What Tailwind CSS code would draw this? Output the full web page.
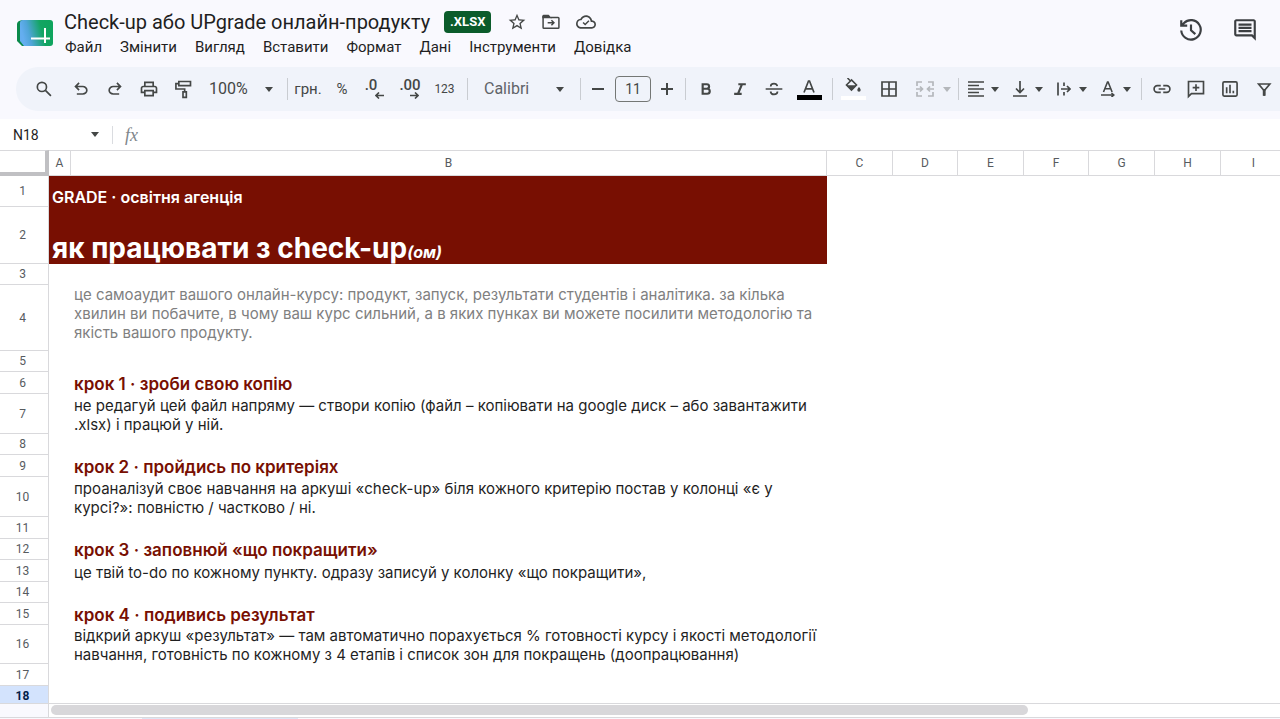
<!DOCTYPE html>
<html lang="uk">
<head>
  <meta charset="UTF-8" />
  <meta name="viewport" content="width=device-width, initial-scale=1.0"/>
  <title>Check-up або UPgrade онлайн-продукту</title>
  <script src="https://cdn.jsdelivr.net/npm/@tailwindcss/browser@4"></script>
</head>
<body class="h-screen flex flex-col overflow-hidden bg-[#f9f9fe] font-[Roboto,sans-serif] text-[#1f1f1f]">

  <!-- Header -->
  <header class="flex shrink-0 items-start h-[67px] pl-4">
    <svg class="w-[38px] h-9 mt-4" viewBox="0 0 38 36" aria-hidden="true">
      <defs>
        <linearGradient id="logo" x1="0" x2="1" y1="0.2" y2="0">
          <stop offset="0" stop-color="#64aef0"/>
          <stop offset="0.2" stop-color="#4fa5d8"/>
          <stop offset="0.6" stop-color="#12a562"/>
          <stop offset="1" stop-color="#0da45c"/>
        </linearGradient>
      </defs>
      <path fill="#0b8a4b" d="M6 4h28v26H6l-5-5V8q0-3 5-4z"/>
      <path fill="url(#logo)" d="M7 4h27q3 0 3 3v20q0 3-3 3H8l-4-5V7q0-3 3-3z"/>
      <path d="M29 12v15M15 22.500h19" stroke="#fff" stroke-width="2" fill="none"/>
    </svg>

    <div class="ml-[10px] mt-2">
      <div class="flex items-center h-7">
        <h1 class="text-xl whitespace-nowrap">Check-up або UPgrade онлайн-продукту</h1>
        <span class="ml-[14px] px-[6px] h-[22px] leading-[22px] rounded bg-[#0b5c2b] text-white text-[13px] font-bold">.XLSX</span>
        <button aria-label="Позначити" class="ml-4 w-5 h-5 text-[#444746]">
          <svg class="w-5 h-5" viewBox="0 0 24 24" fill="currentColor"><path d="M22 9.240l-7.190-.62L12 2 9.190 8.630 2 9.240l5.460 4.730L5.820 21 12 17.270 18.180 21l-1.630-7.030L22 9.240zM12 15.400l-3.760 2.270 1-4.280-3.320-2.880 4.380-.38L12 6.100l1.710 4.040 4.380.38-3.320 2.880 1 4.280L12 15.400z"/></svg>
        </button>
        <button aria-label="Перемістити" class="ml-[14px] w-5 h-5 text-[#444746]">
          <svg class="w-5 h-5" viewBox="0 0 24 24" fill="none" stroke="currentColor" stroke-width="1.800"><path d="M2.500 5v13.500q0 1 1 1h17q1 0 1-1v-11q0-1-1-1h-9M8 13h7M12.500 10l3 3-3 3"/><path fill="currentColor" stroke="none" d="M1.600 7.400V5q0-1.600 1.600-1.600h6L13 7.400z"/></svg>
        </button>
        <button aria-label="Стан документа" class="ml-[15px] w-5 h-5 text-[#444746]">
          <svg class="w-5 h-5" viewBox="0 0 24 24" fill="currentColor"><path d="M19.350 10.040C18.670 6.590 15.640 4 12 4 9.110 4 6.600 5.640 5.350 8.040 2.340 8.360 0 10.910 0 14c0 3.310 2.690 6 6 6h13c2.760 0 5-2.240 5-5 0-2.640-2.050-4.780-4.650-4.960zM19 18H6c-2.210 0-4-1.790-4-4 0-2.050 1.530-3.760 3.560-3.970l1.070-.11.5-.95C8.080 7.140 9.940 6 12 6c2.620 0 4.880 1.860 5.390 4.430l.3 1.500 1.530.11c1.560.1 2.780 1.410 2.780 2.960 0 1.650-1.350 3-3 3z"/><path fill="none" stroke="currentColor" stroke-width="1.800" d="M8.500 12.500l2.500 2.500 4.500-4.500"/></svg>
        </button>
      </div>
      <nav class="flex gap-[18px] ml-px text-[15px] leading-[22px]">
        <button>Файл</button>
        <button>Змінити</button>
        <button>Вигляд</button>
        <button>Вставити</button>
        <button>Формат</button>
        <button>Дані</button>
        <button>Інструменти</button>
        <button>Довідка</button>
      </nav>
    </div>

    <div class="ml-auto mr-[22px] mt-[17px] flex gap-7 text-[#3c3f42]">
      <button aria-label="Історія версій" class="w-[26px] h-[26px]">
        <svg class="w-[26px] h-[26px]" viewBox="0 0 24 24" fill="none" stroke="currentColor" stroke-width="2"><path d="M3 12.500a9 9 0 1 0 2.600-7L3.500 7.600M3 3v5h5.500M12 7v5.200l4 3.600"/></svg>
      </button>
      <button aria-label="Коментарі" class="w-[26px] h-[26px]">
        <svg class="w-[26px] h-[26px]" viewBox="0 0 24 24" fill="currentColor"><path d="M21.990 4c0-1.100-.89-2-1.990-2H4c-1.100 0-2 .9-2 2v12c0 1.100.9 2 2 2h14l4 4-.01-18zM20 4v13.170L18.830 16H4V4h16zM6 12h12v2H6zm0-3h12v2H6zm0-3h12v2H6z"/></svg>
      </button>
    </div>
  </header>

  <!-- Toolbar -->
  <div role="toolbar" class="flex shrink-0 items-center h-[44px] ml-4 pl-2 rounded-l-full bg-[#f0f3fa] overflow-hidden text-[#444746]">
    <button aria-label="Пошук" class="w-10 shrink-0 flex justify-center">
      <svg class="w-5 h-5" viewBox="0 0 24 24" fill="none" stroke="currentColor" stroke-width="2"><circle cx="9.500" cy="9.500" r="5.500"/><path d="M13.700 13.700l6.600 6.600"/></svg>
    </button>
    <button aria-label="Скасувати" class="w-[34px] shrink-0 flex justify-center">
      <svg class="w-5 h-5" viewBox="0 0 24 24" fill="currentColor"><path d="M7 19v-2h7.100q1.575 0 2.738-1T18 13.500t-1.162-2.500T14.100 10H7.800l2.600 2.600L9 14 4 9l5-5 1.400 1.400L7.800 8h6.300q2.425 0 4.163 1.575T20 13.500t-1.737 3.925T14.100 19z"/></svg>
    </button>
    <button aria-label="Повторити" class="w-[34px] shrink-0 flex justify-center">
      <svg class="w-5 h-5" viewBox="0 0 24 24" fill="currentColor"><path transform="matrix(-1 0 0 1 24 0)" d="M7 19v-2h7.100q1.575 0 2.738-1T18 13.500t-1.162-2.500T14.100 10H7.800l2.600 2.600L9 14 4 9l5-5 1.400 1.400L7.800 8h6.300q2.425 0 4.163 1.575T20 13.500t-1.737 3.925T14.100 19z"/></svg>
    </button>
    <button aria-label="Друк" class="w-[34px] shrink-0 flex justify-center">
      <svg class="w-5 h-5" viewBox="0 0 24 24" fill="currentColor"><path d="M19 8h-1V3H6v5H5c-1.660 0-3 1.340-3 3v6h4v4h12v-4h4v-6c0-1.660-1.340-3-3-3zM8 5h8v3H8V5zm8 12v2H8v-4h8v2zm2-2v-2H6v2H4v-4c0-.55.45-1 1-1h14c.55 0 1 .45 1 1v4h-2z"/></svg>
    </button>
    <button aria-label="Копіювати формат" class="w-[34px] shrink-0 flex justify-center">
      <svg class="w-5 h-5" viewBox="0 0 24 24" fill="none" stroke="currentColor" stroke-width="2"><path d="M7 3h14v5H7zM7 5.500H3.500V12H14v3M12 15.500h4V22h-4z"/></svg>
    </button>
    <div class="relative w-20 shrink-0">
      <select aria-label="Масштаб" class="w-full appearance-none pl-[9px] text-base leading-6"><option>100%</option></select>
      <svg class="absolute right-[7px] top-[10px] w-2 h-[5px] pointer-events-none" viewBox="0 0 8 5" fill="currentColor"><path d="M0 0h8L4 5z"/></svg>
    </div>
    <span class="w-px h-[22px] ml-[7px] shrink-0 bg-[#c9ccd1]"></span>
    <button aria-label="Формат валюти" class="w-10 shrink-0 text-[15px]">грн.</button>
    <button aria-label="Формат відсотків" class="w-[28px] shrink-0 text-[15px]">%</button>
    <button aria-label="Менше знаків" class="w-[38px] shrink-0 flex flex-col items-center text-[15px] leading-[13px] font-medium">
      <span class="mr-2">.0</span>
      <svg class="w-[9px] h-[7px] ml-[9px]" viewBox="0 0 9 7" fill="none" stroke="currentColor" stroke-width="1.600"><path d="M9 3.500H1M4 .5l-3 3 3 3"/></svg>
    </button>
    <button aria-label="Більше знаків" class="w-[32px] shrink-0 flex flex-col items-center text-[15px] leading-[13px] font-medium">
      <span>.00</span>
      <svg class="w-[9px] h-[7px] ml-[9px]" viewBox="0 0 9 7" fill="none" stroke="currentColor" stroke-width="1.600"><path d="M0 3.500h8M5 .5l3 3-3 3"/></svg>
    </button>
    <button aria-label="Інші формати" class="w-[37px] shrink-0 text-xs">123</button>
    <span class="w-px h-[22px] ml-[4px] shrink-0 bg-[#c9ccd1]"></span>
    <div class="relative w-24 ml-2 shrink-0">
      <select aria-label="Шрифт" class="w-full appearance-none pl-2 text-base leading-6 text-[#5f6368]"><option>Calibri</option></select>
      <svg class="absolute right-2 top-[10px] w-2 h-[5px] pointer-events-none" viewBox="0 0 8 5" fill="currentColor"><path d="M0 0h8L4 5z"/></svg>
    </div>
    <span class="w-px h-[22px] ml-2 shrink-0 bg-[#c9ccd1]"></span>
    <button aria-label="Зменшити" class="w-[34px] shrink-0 flex justify-center">
      <svg class="w-3 h-3" viewBox="0 0 12 12" stroke="currentColor" stroke-width="2"><path d="M0 6h12"/></svg>
    </button>
    <input aria-label="Розмір шрифту" value="11" class="w-9 h-[26px] shrink-0 rounded border border-[#747775] text-center text-sm" />
    <button aria-label="Збільшити" class="w-[32px] shrink-0 flex justify-center">
      <svg class="w-3 h-3" viewBox="0 0 12 12" stroke="currentColor" stroke-width="2"><path d="M0 6h12M6 0v12"/></svg>
    </button>
    <span class="w-px h-[22px] ml-[2px] shrink-0 bg-[#c9ccd1]"></span>
    <button aria-label="Жирний" class="w-[34px] ml-[3px] shrink-0 flex justify-center">
      <svg class="w-5 h-5" viewBox="0 0 24 24" fill="none" stroke="currentColor" stroke-width="2.600"><path d="M8 6.300h5a2.700 2.700 0 0 1 0 5.400H8zM8 11.700h5.500a3 3 0 0 1 0 6H8z"/></svg>
    </button>
    <button aria-label="Курсив" class="w-[34px] shrink-0 flex justify-center">
      <svg class="w-5 h-5" viewBox="0 0 24 24" fill="none" stroke="currentColor" stroke-width="2.500"><path d="M10 6.200h9M5 17.800h9M14.500 6l-5 12"/></svg>
    </button>
    <button aria-label="Закреслений" class="w-[34px] shrink-0 flex justify-center">
      <svg class="w-5 h-5" viewBox="0 0 24 24" fill="none" stroke="currentColor" stroke-width="2"><path d="M2 12h20M16 8.500C15.500 6.500 14 5.500 12 5.500S8 6.600 8 9M7.800 15c.4 2.200 2 3.500 4.200 3.500s4.200-1.200 4.200-3.500"/></svg>
    </button>
    <button aria-label="Колір тексту" class="w-[36px] pt-[2px] shrink-0 flex flex-col items-center gap-[2px]">
      <svg class="w-[12px] h-[13px]" viewBox="0 0 12 13" fill="none" stroke="currentColor" stroke-width="1.700"><path d="M1 12.500L5.500 1h1L11 12.500M2.800 8.800h6.400"/></svg>
      <span class="w-[25px] h-[5px] bg-black"></span>
    </button>
    <span class="w-px h-[22px] ml-[5px] shrink-0 bg-[#c9ccd1]"></span>
    <button aria-label="Колір заливки" class="w-[36px] ml-[2px] shrink-0 flex flex-col items-center gap-[2px]">
      <svg class="w-4 h-4" viewBox="0 0 16 16" fill="currentColor"><path d="M2.500 0l3 3M6.500 2L1.500 7l5 5 5-5z" fill="none" stroke="currentColor" stroke-width="1.600"/><path d="M1.500 7.300h10l-5 5zM14 9s1.700 1.800 1.700 3a1.700 1.700 0 0 1-3.400 0C12.300 10.800 14 9 14 9z"/></svg>
      <span class="w-[25px] h-1 bg-white"></span>
    </button>
    <button aria-label="Межі" class="w-[36px] shrink-0 flex justify-center">
      <svg class="w-4 h-4" viewBox="0 0 16 16" fill="none" stroke="currentColor" stroke-width="1.700"><path d="M1 1h14v14H1zM8 1v14M1 8h14"/></svg>
    </button>
    <button aria-label="Об'єднати клітинки" disabled class="w-[51px] shrink-0 flex items-center gap-[9px] pl-[9px] text-[#b4b7bb]">
      <svg class="w-[18px] h-4" viewBox="0 0 18 16" fill="none" stroke="currentColor" stroke-width="1.700"><path d="M1 5V1h5M1 11v4h5M17 5V1h-5M17 11v4h-5M0 8h6M4 5.500L6.500 8 4 10.500M18 8h-6M14 5.500L11.500 8l2.500 2.500"/></svg>
      <svg class="w-2 h-[5px]" viewBox="0 0 8 5" fill="currentColor"><path d="M0 0h8L4 5z"/></svg>
    </button>
    <span class="w-px h-[22px] shrink-0 bg-[#c9ccd1]"></span>
    <button aria-label="Вирівнювання по горизонталі" class="w-[44px] shrink-0 flex items-center gap-[7px] pl-[9px]">
      <svg class="w-4 h-4" viewBox="0 0 16 16" stroke="currentColor" stroke-width="1.700"><path d="M0 1h16M0 4.500h11M0 8h16M0 11.500h11M0 15h16"/></svg>
      <svg class="w-2 h-[5px]" viewBox="0 0 8 5" fill="currentColor"><path d="M0 0h8L4 5z"/></svg>
    </button>
    <button aria-label="Вирівнювання по вертикалі" class="w-[44px] shrink-0 flex items-center gap-[8px] pl-[10px]">
      <svg class="w-[14px] h-4" viewBox="0 0 14 16" fill="none" stroke="currentColor" stroke-width="1.700"><path d="M0 15h14M7 0v11M3 7.500l4 4 4-4"/></svg>
      <svg class="w-2 h-[5px]" viewBox="0 0 8 5" fill="currentColor"><path d="M0 0h8L4 5z"/></svg>
    </button>
    <button aria-label="Перенесення тексту" class="w-[44px] shrink-0 flex items-center gap-[8px] pl-[10px]">
      <svg class="w-[14px] h-4" viewBox="0 0 14 16" fill="none" stroke="currentColor" stroke-width="1.700"><path d="M1 1.500v13M7 1.500V5M7 11v3.500M4 8h8.500M10 5l3 3-3 3"/></svg>
      <svg class="w-2 h-[5px]" viewBox="0 0 8 5" fill="currentColor"><path d="M0 0h8L4 5z"/></svg>
    </button>
    <button aria-label="Обертання тексту" class="w-[44px] shrink-0 flex items-center gap-[8px] pl-[10px]">
      <svg class="w-[14px] h-4" viewBox="0 0 14 16" fill="none" stroke="currentColor" stroke-width="1.600"><path d="M2.500 11L6.500 1h.6l4 10M4 7.700h5.600M0 14h12.500M10.500 12l2.300 2-2.300 2"/></svg>
      <svg class="w-2 h-[5px]" viewBox="0 0 8 5" fill="currentColor"><path d="M0 0h8L4 5z"/></svg>
    </button>
    <span class="w-px h-[22px] ml-[6px] shrink-0 bg-[#c9ccd1]"></span>
    <button aria-label="Вставити посилання" class="w-[34px] ml-[3px] shrink-0 flex justify-center">
      <svg class="w-5 h-5" viewBox="0 0 24 24" fill="none" stroke="currentColor" stroke-width="2"><path d="M10.500 8H6.500a4 4 0 0 0 0 8h4M13.500 8h4a4 4 0 0 1 0 8h-4M8 12h8"/></svg>
    </button>
    <button aria-label="Додати коментар" class="w-[34px] shrink-0 flex justify-center">
      <svg class="w-5 h-5" viewBox="0 0 24 24" fill="none" stroke="currentColor" stroke-width="2"><path d="M3 21V3h18v14.500H6.500zM12 6.300v8M8 10.300h8"/></svg>
    </button>
    <button aria-label="Вставити діаграму" class="w-[34px] shrink-0 flex justify-center">
      <svg class="w-5 h-5" viewBox="0 0 24 24" fill="none" stroke="currentColor" stroke-width="2"><rect x="3.500" y="3.500" width="17" height="17" rx="1.500"/><path d="M8 10v7M12 7v10M16 14v3"/></svg>
    </button>
    <button aria-label="Створити фільтр" class="w-[34px] shrink-0 flex justify-center">
      <svg class="w-5 h-5" viewBox="0 0 24 24" fill="none" stroke="currentColor" stroke-width="2"><path d="M5.500 6h13.500L12.250 14zM12.250 12v8" /><path d="M12.250 13v7" stroke-width="3.400"/></svg>
    </button>
  </div>

  <!-- Name box and formula bar -->
  <div class="flex shrink-0 items-center h-[31px] mt-2 bg-white">
    <input aria-label="Ім'я клітинки" value="N18" class="w-[72px] pl-[13px] text-sm" />
    <svg class="w-2 h-[5px] ml-[19px] text-[#444746]" viewBox="0 0 8 5" fill="currentColor"><path d="M0 0h8L4 5z"/></svg>
    <span class="w-px h-[18px] ml-[13px] bg-[#dadce0]"></span>
    <label for="formula" class="ml-3 w-5 font-[Liberation_Serif,serif] italic text-lg leading-5 text-[#80868b]">fx</label>
    <input id="formula" class="flex-1 h-6 text-sm outline-none" />
  </div>

  <!-- Grid -->
  <main class="flex-1 min-h-0 overflow-hidden bg-white">
    <table class="w-max table-fixed border-separate border-spacing-0 whitespace-nowrap font-[Inter,sans-serif]">
      <colgroup>
        <col class="w-[49px]"><col class="w-[22px]"><col class="w-[756px]">
        <col class="w-[66px]"><col class="w-[65px]"><col class="w-[66px]"><col class="w-[65px]"><col class="w-[66px]"><col class="w-[66px]"><col class="w-[66px]">
      </colgroup>
      <thead class="font-[Roboto,sans-serif] text-xs text-[#575b5f]">
        <tr class="h-[26px] [&>th]:p-0 [&>th]:font-normal [&>th]:border-y [&>th]:border-r [&>th]:border-[#d9d9dc]">
          <th class="border-b-4! border-r-4! border-b-[#c0c0c3]! border-r-[#c0c0c3]!"></th>
          <th>A</th><th>B</th><th>C</th><th>D</th><th>E</th><th>F</th><th>G</th><th>H</th><th>I</th>
        </tr>
      </thead>
      <tbody class="text-[15px] leading-[19px] text-[#1f1f1f] [&_th]:py-0 [&_th]:pl-0 [&_th]:pr-[3px] [&_th]:border-b [&_th]:border-r [&_th]:border-[#d9d9dc] [&_th]:font-[Roboto,sans-serif] [&_th]:text-xs [&_th]:font-normal [&_th]:text-[#575b5f] [&_td]:py-0 [&_td]:px-[3px] [&_td]:align-bottom">
        <tr class="h-[31px]"><th>1</th><td colspan="2" class="bg-[#780f02] text-white font-semibold text-base leading-[19px]">GRADE · освітня агенція</td></tr>
        <tr class="h-[57px]"><th>2</th><td colspan="2" class="bg-[#780f02] text-white font-bold text-[28px] leading-8">як працювати з check-up<span class="text-base italic">(ом)</span></td></tr>
        <tr class="h-[21px]"><th>3</th></tr>
        <tr class="h-[66px]"><th>4</th><td></td><td class="align-top! text-[#80807f]">це самоаудит вашого онлайн-курсу: продукт, запуск, результати студентів і аналітика. за кілька<br>хвилин ви побачите, в чому ваш курс сильний, а в яких пунках ви можете посилити методологію та<br>якість вашого продукту.</td></tr>
        <tr class="h-[21px]"><th>5</th></tr>
        <tr class="h-[22px]"><th>6</th><td></td><td class="font-semibold text-[17px] text-[#780f02]">крок 1 · зроби свою копію</td></tr>
        <tr class="h-[40px]"><th>7</th><td></td><td>не редагуй цей файл напряму — створи копію (файл – копіювати на google диск – або завантажити<br>.xlsx) і працюй у ній.</td></tr>
        <tr class="h-[21px]"><th>8</th></tr>
        <tr class="h-[22px]"><th>9</th><td></td><td class="font-semibold text-[17px] text-[#780f02]">крок 2 · пройдись по критеріях</td></tr>
        <tr class="h-[40px]"><th>10</th><td></td><td>проаналізуй своє навчання на аркуші «check-up» біля кожного критерію постав у колонці «є у<br>курсі?»: повністю / частково / ні.</td></tr>
        <tr class="h-[22px]"><th>11</th></tr>
        <tr class="h-[21px]"><th>12</th><td></td><td class="font-semibold text-[17px] text-[#780f02]">крок 3 · заповнюй «що покращити»</td></tr>
        <tr class="h-[22px]"><th>13</th><td></td><td>це твій to-do по кожному пункту. одразу записуй у колонку «що покращити»,</td></tr>
        <tr class="h-[21px]"><th>14</th></tr>
        <tr class="h-[22px]"><th>15</th><td></td><td class="font-semibold text-[17px] text-[#780f02]">крок 4 · подивись результат</td></tr>
        <tr class="h-[39px]"><th>16</th><td></td><td>відкрий аркуш «результат» — там автоматично порахується % готовності курсу і якості методології<br>навчання, готовність по кожному з 4 етапів і список зон для покращень (доопрацювання)</td></tr>
        <tr class="h-[22px]"><th>17</th></tr>
        <tr class="h-[21px]"><th class="bg-[#d3e3fd] font-bold! text-[#041e49]!">18</th></tr>
      </tbody>
    </table>
  </main>

  <!-- Horizontal scrollbar and the top of the sheet tabs -->
  <div class="flex shrink-0 h-[15px] border-y border-[#d9d9dc] bg-white">
    <div class="w-[49px] border-r border-[#d9d9dc] bg-[#f9f9fe]"></div>
    <div class="flex-1 flex items-start pt-px pl-[2px]"><div class="w-[79.500%] h-[10px] rounded-full bg-[#d8d7da]"></div></div>
  </div>
  <div class="shrink-0 h-px bg-[#f9f9fe]"><div class="ml-[142px] w-[156px] h-px bg-[#dde5f5]"></div></div>

</body>
</html>
